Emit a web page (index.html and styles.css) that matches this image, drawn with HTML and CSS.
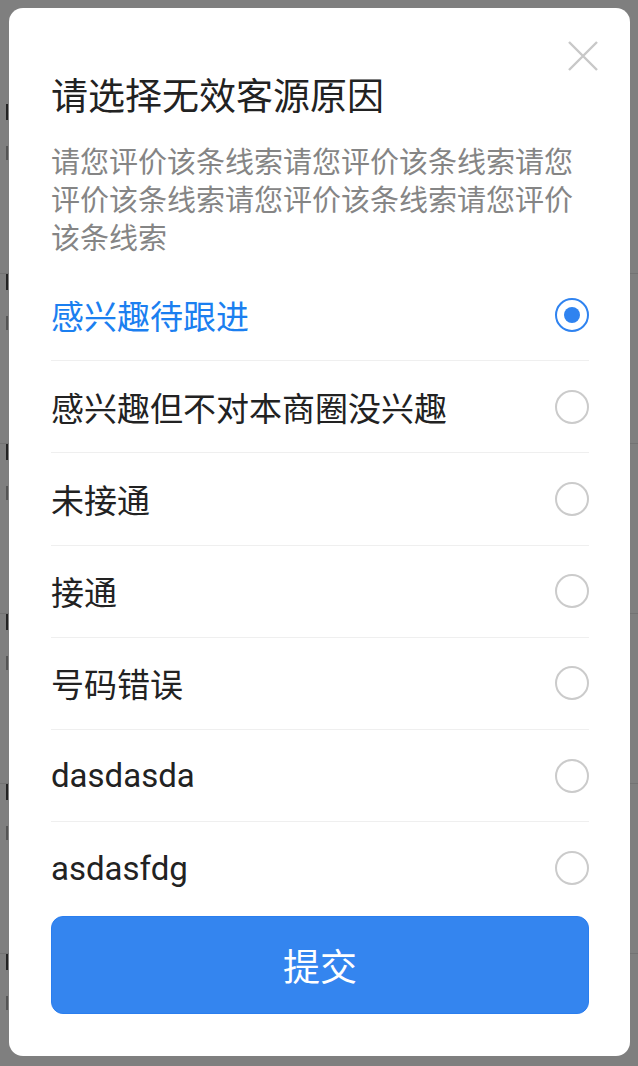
FILE: index.html
```html
<!DOCTYPE html>
<html lang="zh-CN">
<head>
<meta charset="utf-8">
<title>请选择无效客源原因</title>
<link rel="stylesheet" href="styles.css">
</head>
<body>
<div class="page">
  <div class="item"></div>
  <div class="item"></div>
  <div class="item"></div>
  <div class="item"></div>
  <div class="item"></div>
  <div class="item"></div>
</div>
<div class="mask">
  <div class="modal">
    <button class="close" aria-label="关闭">
      <svg width="30" height="30" viewBox="0 0 30 30"><path d="M1 1 L29 29 M29 1 L1 29" stroke="#c8c8c8" stroke-width="2.4" fill="none"/></svg>
    </button>
    <h1 class="title">请选择无效客源原因</h1>
    <p class="desc">请您评价该条线索请您评价该条线索请您评价该条线索请您评价该条线索请您评价该条线索</p>
    <ul class="options">
      <li class="option active"><span class="label">感兴趣待跟进</span><span class="radio"></span></li>
      <li class="option"><span class="label">感兴趣但不对本商圈没兴趣</span><span class="radio"></span></li>
      <li class="option"><span class="label">未接通</span><span class="radio"></span></li>
      <li class="option"><span class="label">接通</span><span class="radio"></span></li>
      <li class="option"><span class="label">号码错误</span><span class="radio"></span></li>
      <li class="option"><span class="label">dasdasda</span><span class="radio"></span></li>
      <li class="option last"><span class="label">asdasfdg</span><span class="radio"></span></li>
    </ul>
    <button class="submit">提交</button>
  </div>
</div>
</body>
</html>
```

FILE: styles.css
```css
* { box-sizing: border-box; }
html, body { margin: 0; padding: 0; }
body {
  width: 638px;
  height: 1066px;
  overflow: hidden;
  background: #ffffff;
  font-family: Roboto, "Noto Sans CJK SC", sans-serif;
}
.page {
  height: 1066px;
  overflow: hidden;
  padding-top: 104px;
}
.item {
  height: 170px;
  padding: 0 0 0 6px;
  border-bottom: 1px solid #e6e6e6;
  display: flex;
  flex-direction: column;
  gap: 26px;
}
.item::before {
  content: "";
  width: 2px;
  height: 16px;
  background: #444;
}
.item::after {
  content: "";
  width: 2px;
  height: 14px;
  background: #aaa;
}
.mask {
  position: fixed;
  inset: 0;
  background: rgba(0, 0, 0, 0.5);
  padding: 8px 8px 10px 9px;
  display: flex;
}
.modal {
  position: relative;
  flex: 1;
  background: #fff;
  border-radius: 14px;
  padding: 60px 41px 42px 42px;
  display: flex;
  flex-direction: column;
}
.close {
  position: absolute;
  top: 33px;
  right: 32px;
  width: 30px;
  height: 30px;
  padding: 0;
  border: 0;
  background: none;
}
.close svg { display: block; }
.title {
  margin: 0;
  font-size: 37px;
  line-height: 52px;
  font-weight: 400;
  color: #222;
  font-family: "Noto Sans CJK SC", sans-serif;
}
.desc {
  margin: 21px 0 0;
  font-size: 29px;
  line-height: 38px;
  color: #858585;
  font-family: "Noto Sans CJK SC", sans-serif;
}
.options {
  list-style: none;
  margin: 14px 0 0;
  padding: 0;
}
.option {
  height: 92.2px;
  border-bottom: 1px solid #efefef;
  display: flex;
  align-items: center;
  justify-content: space-between;
}
.option.last { border-bottom: 0; }
.label {
  font-size: 33px;
  color: #222;
}
.option.active .label { color: #1b7ff0; }
.radio {
  width: 34px;
  height: 34px;
  border-radius: 50%;
  border: 2px solid #cbcbcb;
  display: flex;
  align-items: center;
  justify-content: center;
}
.option.active .radio { border-color: #2f83f0; }
.option.active .radio::after {
  content: "";
  width: 16px;
  height: 16px;
  border-radius: 50%;
  background: #2f83f0;
}
.submit {
  margin-top: 2px;
  height: 99px;
  width: 100%;
  border: 1px solid #2a7eef;
  border-radius: 12px;
  background: #3485ef;
  color: #fff;
  font-size: 37px;
  font-family: "Noto Sans CJK SC", sans-serif;
  padding: 0;
}
```
